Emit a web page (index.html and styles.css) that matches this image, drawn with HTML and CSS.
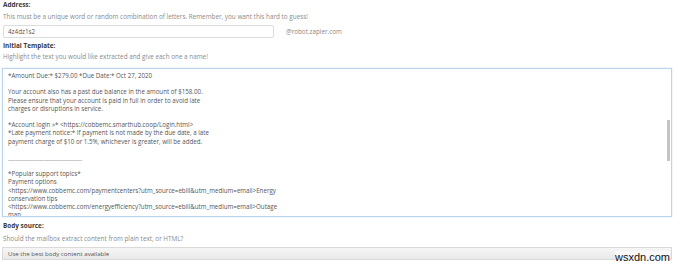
FILE: index.html
```html
<!DOCTYPE html>
<html lang="en">
<head>
    <meta charset="UTF-8">
    <title>Mailbox Settings</title>
    <link rel="stylesheet" href="styles.css">
</head>
<body>
<div class="form">
    <div class="field-label">Address:</div>
    <div class="field-help">This must be a unique word or random combination of letters. Remember, you want this hard to guess!</div>
    <div class="address-row">
        <div class="text-input">4z4dz1s2</div>
        <span class="domain">@robot.zapier.com</span>
    </div>

    <div class="field-label label-gap">Initial Template:</div>
    <div class="field-help help-tight">Highlight the text you would like extracted and give each one a name!</div>
    <div class="template-box">
        <div class="template-text">
            <p>*Amount Due:* $279.00 *Due Date:* Oct 27, 2020</p>
            <p>&nbsp;</p>
            <p>Your account also has a past due balance in the amount of $158.00.</p>
            <p>Please ensure that your account is paid in full in order to avoid late</p>
            <p>charges or disruptions in service.</p>
            <p>&nbsp;</p>
            <p>*Account login »* &lt;https://cobbemc.smarthub.coop/Login.html&gt;</p>
            <p>*Late payment notice:* If payment is not made by the due date, a late</p>
            <p>payment charge of $10 or 1.5%, whichever is greater, will be added.</p>
            <p>&nbsp;</p>
            <p class="rule">________________________________</p>
            <p>&nbsp;</p>
            <p>*Popular support topics*</p>
            <p>Payment options</p>
            <p>&lt;https://www.cobbemc.com/paymentcenters?utm_source=ebill&amp;utm_medium=email&gt;Energy</p>
            <p>conservation tips</p>
            <p>&lt;https://www.cobbemc.com/energyefficiency?utm_source=ebill&amp;utm_medium=email&gt;Outage</p>
            <p>map</p>
        </div>
        <div class="scroll-thumb"></div>
    </div>

    <div class="field-label body-gap">Body source:</div>
    <div class="field-help help-body">Should the mailbox extract content from plain text, or HTML?</div>
    <div class="select-box">Use the best body content available</div>
</div>
<div class="watermark">wsxdn.com</div>
</body>
</html>
```

FILE: styles.css
```css
/* Reset */
* {
    box-sizing: border-box;
    margin: 0;
    padding: 0;
}

body {
    font-family: 'Open Sans', sans-serif;
    background-color: #fff;
    color: #333;
    width: 680px;
    height: 266px;
    overflow: hidden;
    position: relative;
}

.form {
    padding: 0 8px 0 2px;
}

/* Labels and help text */
.field-label {
    font-size: 6.4px;
    font-weight: 700;
    line-height: 10px;
    height: 10px;
    padding-left: 1px;
    color: #3a3a3a;
}

.field-help {
    font-size: 6.35px;
    line-height: 10px;
    height: 10px;
    margin-top: 2px;
    padding-left: 1px;
    color: #8a8a8a;
}

.label-gap {
    margin-top: 3px;
}

.help-tight {
    margin-top: 1px;
}

.body-gap {
    margin-top: 4px;
}

.help-body {
    margin-top: 3px;
}

/* Address input */
.address-row {
    display: flex;
    align-items: center;
    margin-top: 3px;
    padding-left: 1px;
}

.text-input {
    width: 271px;
    height: 13px;
    border: 1px solid #dcdcdc;
    border-radius: 2px;
    font-size: 6.3px;
    line-height: 11px;
    padding-left: 4px;
    color: #555;
}

.domain {
    margin-left: 12px;
    font-size: 6.3px;
    color: #8a8a8a;
}

/* Template textarea */
.template-box {
    position: relative;
    margin-top: 6px;
    width: 670px;
    height: 149px;
    border: 1px solid #b9d6f0;
    box-shadow: 0 0 1px rgba(120, 170, 220, 0.5);
    overflow: hidden;
}

.template-text {
    padding: 3px 0 0 5px;
    font-size: 6.2px;
    line-height: 8.2px;
    color: #555;
}

.template-text p {
    height: 8.2px;
    white-space: nowrap;
}

.rule {
    color: #999;
    letter-spacing: -0.4px;
}

.scroll-thumb {
    position: absolute;
    right: 1px;
    top: 51px;
    width: 3px;
    height: 41px;
    background-color: #c4c4c4;
}

/* Body source select */
.select-box {
    margin-top: 3px;
    width: 670px;
    height: 13px;
    border: 1px solid #dadada;
    background: linear-gradient(to bottom, #f6f6f6, #e9e9e9);
    font-size: 6.1px;
    line-height: 11px;
    padding-left: 5px;
    color: #555;
}

.watermark {
    position: absolute;
    right: 10px;
    bottom: 3px;
    font-family: 'Liberation Sans', Arial, sans-serif;
    font-size: 11px;
    color: #111;
    background-color: rgba(255, 255, 255, 0.6);
}
```
